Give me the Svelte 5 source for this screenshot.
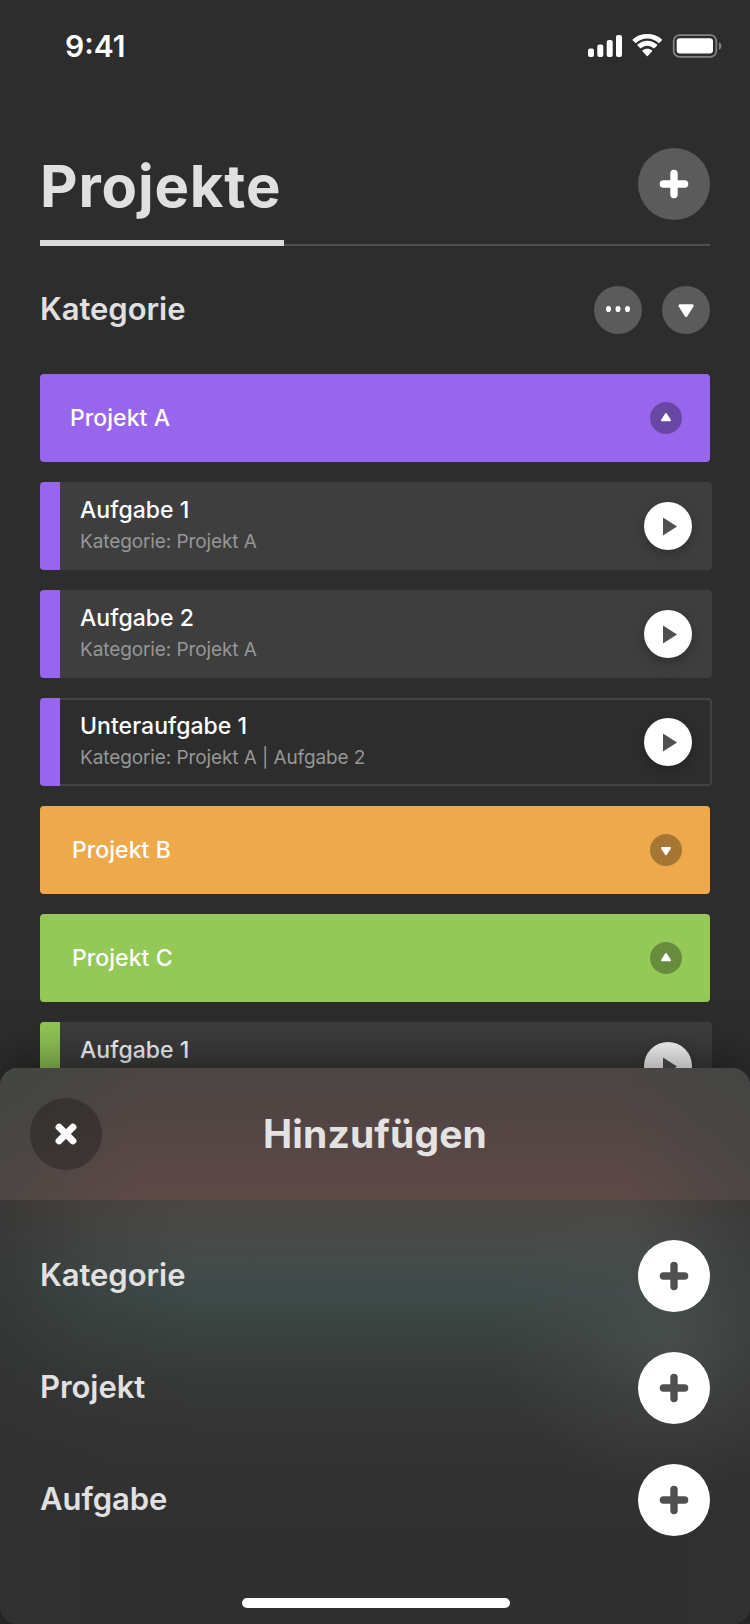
<script lang="ts">
  type Item = {
    kind: 'project' | 'task' | 'subtask';
    title: string;
    color: string;
    sub?: string;
    open?: boolean;
  };

  const purple = '#9766ec';
  const orange = '#eea94c';
  const green = '#94c958';

  const items: Item[] = [
    { kind: 'project', title: 'Projekt A', color: purple, open: true },
    { kind: 'task', title: 'Aufgabe 1', sub: 'Kategorie: Projekt A', color: purple },
    { kind: 'task', title: 'Aufgabe 2', sub: 'Kategorie: Projekt A', color: purple },
    { kind: 'subtask', title: 'Unteraufgabe 1', sub: 'Kategorie: Projekt A | Aufgabe 2', color: purple },
    { kind: 'project', title: 'Projekt B', color: orange, open: false },
    { kind: 'project', title: 'Projekt C', color: green, open: true },
    { kind: 'task', title: 'Aufgabe 1', color: green },
  ];

  const actions = ['Kategorie', 'Projekt', 'Aufgabe'];
</script>

{#snippet plus()}
  <svg width="30" height="30" viewBox="0 0 30 30">
    <path d="M15 4.4v21.2M4.4 15h21.2" fill="none" stroke="currentColor" stroke-width="7.4" stroke-linecap="round" />
  </svg>
{/snippet}

<div class="screen">
  <div class="status">
    <span class="time">9:41</span>
    <svg width="134" height="24" viewBox="0 0 134 24" fill="#fff">
      <rect x="0" y="14.6" width="6" height="8.4" rx="2" />
      <rect x="9.3" y="10.6" width="6" height="12.4" rx="2" />
      <rect x="18.7" y="6" width="6" height="17" rx="2" />
      <rect x="28" y="1" width="6" height="22" rx="2" />
      <path d="M59.3 4.6c4.3 0 8.2 1.6 11.1 4.4.2.2.6.2.8 0l2.8-2.8c.2-.2.2-.6 0-.8C66-1.8 52.600-1.8 44.600 5.400c-.2.2-.2.600 0 .8l2.800 2.800c.2.2.6.2.8 0 2.900-2.800 6.800-4.400 11.100-4.400z" />
      <path d="M59.3 11.8c2.300 0 4.500.9 6.200 2.400.2.200.6.200.8 0l2.800-2.800c.2-.2.2-.6 0-.8-5.500-5.200-14.100-5.200-19.600 0-.2.2-.2.6 0 .8l2.800 2.800c.2.2.6.2.8 0 1.700-1.500 3.900-2.400 6.200-2.400z" />
      <path d="M64.2 17.200c.3-.2.200-.6 0-.8-2.800-2.300-7-2.300-9.800 0-.2.2-.3.600 0 .8l4.500 4.700c.2.3.6.3.8 0z" />
      <rect x="85.7" y="1.2" width="42.600" height="21.600" rx="5.800" fill="none" stroke="#828282" stroke-width="1.800" />
      <rect x="88.7" y="4.2" width="36.300" height="15.300" rx="3.300" />
      <path d="M131 8.2c1.500.7 2.400 2.100 2.400 3.800s-.9 3.100-2.400 3.800z" fill="#828282" />
    </svg>
  </div>

  <header class="top">
    <h1>Projekte</h1>
    <button class="round big">{@render plus()}</button>
  </header>
  <div class="rule"><div class="marker"></div></div>

  <div class="filter">
    <h2>Kategorie</h2>
    <button class="round">
      <svg width="48" height="48" viewBox="0 0 48 48" fill="#fff">
        <ellipse cx="14.5" cy="23" rx="2.5" ry="3.1" />
        <ellipse cx="24" cy="23" rx="2.5" ry="3.1" />
        <ellipse cx="33.5" cy="23" rx="2.5" ry="3.1" />
      </svg>
    </button>
    <button class="round">
      <svg width="48" height="48" viewBox="0 0 48 48" fill="#fff" stroke="#fff" stroke-width="3" stroke-linejoin="round">
        <path d="M18 19.700h12.200L24.100 29.400z" />
      </svg>
    </button>
  </div>

  <main>
    {#each items as item}
      {#if item.kind === 'project'}
        <section class="project" class:indent={item.color !== purple} style="background: {item.color}">
          <span class="name">{item.title}</span>
          <button class="toggle">
            <svg width="32" height="32" viewBox="0 0 32 32" fill="#fff" stroke="#fff" stroke-width="2" stroke-linejoin="round">
              {#if item.open}
                <path d="M12 18.200h8L16 12.100z" />
              {:else}
                <path d="M12 14h8l-4 6.100z" />
              {/if}
            </svg>
          </button>
        </section>
      {:else}
        <section class="task" class:outlined={item.kind === 'subtask'}>
          <div class="bar" style="background: {item.color}"></div>
          <div class="info">
            <span class="name">{item.title}</span>
            {#if item.sub}<span class="sub">{item.sub}</span>{/if}
          </div>
          <button class="play">
            <svg width="48" height="48" viewBox="0 0 48 48">
              <path d="M19 15.500v18l14-9z" fill="#505050" />
            </svg>
          </button>
        </section>
      {/if}
    {/each}
  </main>

  <div class="sheet">
    <div class="sheet-head">
      <button class="close">
        <svg width="24" height="24" viewBox="0 0 24 24">
          <path d="M5.1 5.100l13.800 13.800M18.900 5.100L5.100 18.900" fill="none" stroke="#fff" stroke-width="7" stroke-linecap="round" />
        </svg>
      </button>
      <h3>Hinzufügen</h3>
    </div>
    <div class="actions">
      {#each actions as action}
        <div class="action">
          <h2>{action}</h2>
          <button class="round big light">{@render plus()}</button>
        </div>
      {/each}
      <div class="home"></div>
    </div>
  </div>
</div>

<style>
  :global(body) {
    background: #2d2d2d;
  }

  .screen {
    position: relative;
    width: 750px;
    height: 1624px;
    overflow: hidden;
    background: #2d2d2d;
    color: #fff;
    font-family: Inter, 'Liberation Sans', sans-serif;
  }

  h1, h2, h3 {
    margin: 0;
    color: #e0e0e0;
  }

  button {
    display: flex;
    align-items: center;
    justify-content: center;
    flex: none;
    padding: 0;
    border: none;
    border-radius: 50%;
    color: #fff;
  }

  svg {
    display: block;
  }

  .status {
    display: flex;
    justify-content: space-between;
    align-items: center;
    height: 92px;
    padding: 0 28px 0 65px;
  }

  .time {
    margin-top: -1px;
    font-size: 30px;
    font-weight: 600;
  }

  .top {
    display: flex;
    justify-content: space-between;
    align-items: center;
    height: 72px;
    margin-top: 56px;
    padding: 0 40px;
  }

  h1 {
    padding-top: 3px;
    font-size: 58px;
    line-height: 72px;
    font-weight: 700;
    letter-spacing: 0.85px;
  }

  .round {
    width: 48px;
    height: 48px;
    background: #5b5b5b;
  }

  .big {
    width: 72px;
    height: 72px;
  }

  .light {
    background: #fff;
    color: #505050;
  }

  .rule {
    display: flex;
    height: 6px;
    margin: 20px 40px 0;
    background: linear-gradient(transparent 4px, #4f4f4f 4px);
  }

  .marker {
    width: 244px;
    background: #dadada;
  }

  .filter {
    display: flex;
    align-items: center;
    gap: 20px;
    height: 48px;
    padding: 40px 40px;
  }

  h2 {
    flex: 1;
    padding-bottom: 2px;
    font-size: 31px;
    line-height: 40px;
    font-weight: 600;
    letter-spacing: -0.05px;
  }

  main {
    display: flex;
    flex-direction: column;
    gap: 20px;
    padding: 0 38px 0 40px;
  }

  .project {
    display: flex;
    align-items: center;
    justify-content: space-between;
    width: 670px;
    height: 88px;
    box-sizing: border-box;
    padding: 0 28px 0 30px;
    border-radius: 4px;
  }

  .project.indent {
    padding-left: 32px;
  }

  .name {
    font-size: 23px;
    line-height: 28px;
    font-weight: 500;
    letter-spacing: 0.05px;
  }

  .toggle {
    width: 32px;
    height: 32px;
    background: rgba(0, 0, 0, 0.3);
  }

  .task {
    display: flex;
    align-items: center;
    height: 88px;
    box-sizing: border-box;
    padding-right: 20px;
    border-radius: 4px;
    background: #3e3e3e;
  }

  .outlined {
    background: none;
    box-shadow: inset 0 0 0 2px #424242;
  }

  .bar {
    width: 20px;
    height: 88px;
    border-radius: 4px 0 0 4px;
  }

  .info {
    flex: 1;
    display: flex;
    flex-direction: column;
    align-self: flex-start;
    padding: 14px 0 0 20px;
  }

  .sub {
    margin-top: 6px;
    font-size: 19px;
    line-height: 24px;
    letter-spacing: -0.1px;
    color: #969696;
  }

  .play {
    width: 48px;
    height: 48px;
    background: #fff;
    box-shadow: 0 4px 12px rgba(0, 0, 0, 0.25);
  }

  .sheet {
    position: absolute;
    left: 0;
    right: 0;
    bottom: 0;
    height: 556px;
    border-radius: 18px;
    overflow: hidden;
    box-shadow: 0 0 60px rgba(0, 0, 0, 0.6);
  }

  .sheet-head {
    display: grid;
    grid-template-columns: 72px 1fr 72px;
    align-items: center;
    height: 132px;
    box-sizing: border-box;
    padding: 0 30px;
    background:
      radial-gradient(120px 110px at 0 0, rgba(65, 70, 63, 0.8), transparent),
      radial-gradient(120px 110px at 100% 0, rgba(67, 69, 67, 0.7), transparent),
      linear-gradient(90deg, rgba(71, 69, 67, 0.75), transparent 19%, transparent 83%, rgba(71, 69, 68, 0.8)),
      linear-gradient(#4a4543, #524543 40%, #5f4a47);
  }

  .close {
    width: 72px;
    height: 72px;
    background: rgba(0, 0, 0, 0.25);
  }

  h3 {
    font-size: 39px;
    line-height: 48px;
    font-weight: 700;
    letter-spacing: 0.15px;
    text-align: center;
    color: #e5e2e2;
  }

  .actions {
    display: flex;
    flex-direction: column;
    gap: 40px;
    height: 424px;
    box-sizing: border-box;
    padding: 40px 40px 0;
    background:
      radial-gradient(180px 150px at 670px 140px, rgba(78, 84, 83, 0.65), rgba(74, 77, 76, 0.35) 50%, transparent),
      linear-gradient(90deg, rgba(49, 49, 49, 0.7), rgba(49, 49, 49, 0.25) 12%, transparent 26%, transparent 84%, rgba(49, 49, 49, 0.6)),
      linear-gradient(#4c4643, #494946 24px, #444b49 60px, #3d4a48 95px, #39423f 135px, #363838 185px, #333333 240px, #303030 340px);
  }

  .action {
    display: flex;
    align-items: center;
    height: 72px;
  }

  .action h2 {
    color: #e1e1e1;
  }

  .home {
    align-self: center;
    width: 268px;
    height: 10px;
    margin: 22px 0 0 2px;
    border-radius: 5px;
    background: #fff;
  }
</style>
